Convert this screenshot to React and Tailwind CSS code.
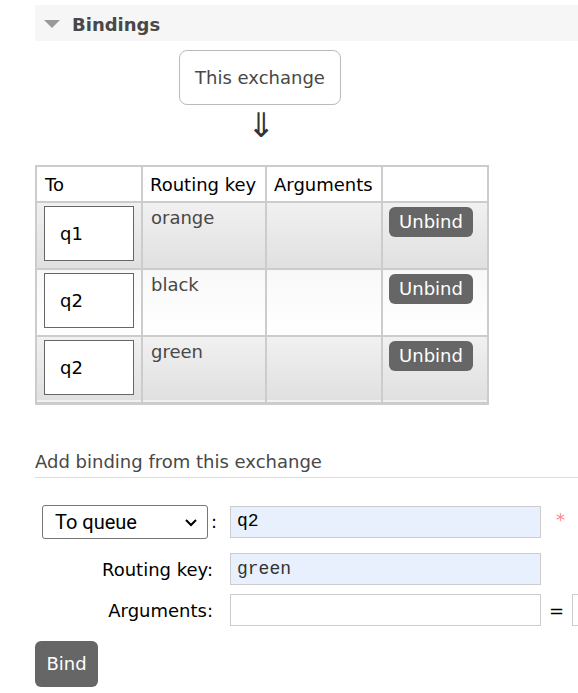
import React from 'react';

const bindings = [
  { to: 'q1', key: 'orange', alt: false },
  { to: 'q2', key: 'black', alt: true },
  { to: 'q2', key: 'green', alt: false },
];

export default function App() {
  return (
    <div className="w-[578px] h-[693px] overflow-hidden bg-white text-[#484848] font-['DejaVu_Sans',Verdana,sans-serif] text-[18px]">
      <div className="pl-[35px] pt-[5px] w-[700px]">
        {/* section header */}
        <div className="h-[36px] bg-[#f6f6f6] flex items-center pl-[9px] pt-[3px]">
          <svg width="16" height="9" viewBox="0 0 16 9" className="mr-[12px]">
            <polygon points="0,0 16,0 8,8" fill="#999" />
          </svg>
          <span className="font-bold text-[18px] text-[#484848]">Bindings</span>
        </div>

        <div className="w-[452px] flex flex-col items-center">
          <div className="mt-[9px] ml-[-2px] w-[162px] h-[55px] border border-[#bbb] rounded-[8px] flex items-center justify-center text-[18px]">
            This exchange
          </div>
          <div className="h-[60px] pt-[3px] text-[34px] leading-[34px] text-[#333]">⇓</div>
        </div>

        {/* bindings table */}
        <table className="border-collapse table-fixed w-[452px] text-[18px] whitespace-nowrap">
          <colgroup>
            <col className="w-[106px]" />
            <col className="w-[124px]" />
            <col className="w-[116px]" />
            <col className="w-[106px]" />
          </colgroup>
          <thead>
            <tr className="h-[36px] bg-white">
              <th className="border-2 border-[#ccc] text-left font-normal text-black px-[8px]">To</th>
              <th className="border-2 border-[#ccc] text-left font-normal text-black px-[7px]">Routing key</th>
              <th className="border-2 border-[#ccc] text-left font-normal text-black px-[7px]">Arguments</th>
              <th className="border-2 border-[#ccc]"></th>
            </tr>
          </thead>
          <tbody>
            {bindings.map((b, i) => (
              <tr
                key={i}
                className={`h-[67px] ${b.alt ? 'bg-gradient-to-b from-[#f8f8f8] to-white' : 'bg-gradient-to-b from-[#f1f1f1] to-[#e0e0e0]'} ${i === bindings.length - 1 ? 'border-b-[3px] border-[#ccc]' : ''}`}
              >
                <td className="border-2 border-[#ccc] align-top px-[7px] pt-[3px]">
                  <div className="w-[90px] h-[55px] border border-[#666] bg-white flex items-center pl-[15px] text-black">
                    {b.to}
                  </div>
                </td>
                <td className="border-2 border-[#ccc] align-top px-[8px] pt-[3px] leading-[24px] text-[#484848]">{b.key}</td>
                <td className="border-2 border-[#ccc]"></td>
                <td className="border-2 border-[#ccc] align-top px-[6px] pt-[4px]">
                  <button className="w-[84px] h-[30px] bg-[#666] rounded-[6px] text-white font-normal text-[18px] leading-none">
                    Unbind
                  </button>
                </td>
              </tr>
            ))}
          </tbody>
        </table>

        {/* add binding */}
        <div className="mt-[46px] border-b border-[#ddd] pb-[4px] text-[18px] leading-[22px] text-[#484848]">
          Add binding from this exchange
        </div>

        <div className="mt-[25px] flex flex-col">
          <div className="h-[38px] flex items-center">
            <div className="w-[195px] flex items-center pl-[7px]">
              <div className="relative w-[166px] h-[34px] border border-[#767676] rounded-[3px] bg-white flex items-center pl-[12px] font-['Liberation_Sans_Narrow','Roboto',sans-serif] text-[20px] text-black">
                To queue
                <svg width="12" height="8" viewBox="0 0 12 8" className="absolute right-[10px] top-[13px]">
                  <polyline points="1,1 6,6 11,1" fill="none" stroke="#000" strokeWidth="2" />
                </svg>
              </div>
              <span className="ml-[3px] text-black">:</span>
            </div>
            <div className="w-[311px] h-[32px] border border-[#ccc] bg-[#e8f0fe] flex items-center pl-[6px] font-['Liberation_Mono','Courier_New',monospace] text-[18px] text-black">
              q2
            </div>
            <span className="ml-[15px] text-[#f88] text-[18px] pb-[4px]">*</span>
          </div>

          <div className="mt-[11px] h-[35px] flex items-center">
            <div className="w-[178px] text-right text-black">Routing key:</div>
            <div className="ml-[17px] w-[311px] h-[32px] border border-[#ccc] bg-[#e8f0fe] flex items-center pl-[6px] font-['Liberation_Mono','Courier_New',monospace] text-[18px] text-[#333]">
              green
            </div>
          </div>

          <div className="mt-[6px] h-[35px] flex items-center">
            <div className="w-[178px] text-right text-black">Arguments:</div>
            <div className="ml-[17px] w-[311px] h-[32px] border border-[#ccc] bg-white"></div>
            <span className="mx-[8px] text-black">=</span>
            <div className="w-[100px] h-[32px] border border-[#ccc] bg-white"></div>
          </div>
        </div>

        <button className="mt-[13px] w-[63px] h-[46px] bg-[#666] rounded-[6px] text-white font-normal text-[18px]">
          Bind
        </button>
      </div>
    </div>
  );
}
